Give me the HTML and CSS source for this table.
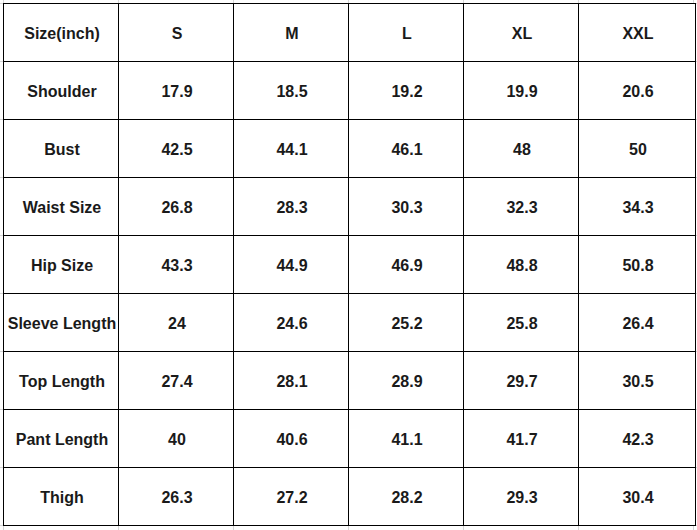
FILE: index.html
```html
<!DOCTYPE html>
<html lang="en">
<head>
<meta charset="utf-8">
<title>Size chart</title>
<link rel="stylesheet" href="styles.css">
</head>
<body>
<div class="page">
  <div class="chart" role="table">
    <div class="cell">Size(inch)</div><div class="cell">S</div><div class="cell">M</div><div class="cell">L</div><div class="cell">XL</div><div class="cell">XXL</div>
    <div class="cell">Shoulder</div><div class="cell">17.9</div><div class="cell">18.5</div><div class="cell">19.2</div><div class="cell">19.9</div><div class="cell">20.6</div>
    <div class="cell">Bust</div><div class="cell">42.5</div><div class="cell">44.1</div><div class="cell">46.1</div><div class="cell">48</div><div class="cell">50</div>
    <div class="cell">Waist Size</div><div class="cell">26.8</div><div class="cell">28.3</div><div class="cell">30.3</div><div class="cell">32.3</div><div class="cell">34.3</div>
    <div class="cell">Hip Size</div><div class="cell">43.3</div><div class="cell">44.9</div><div class="cell">46.9</div><div class="cell">48.8</div><div class="cell">50.8</div>
    <div class="cell">Sleeve Length</div><div class="cell">24</div><div class="cell">24.6</div><div class="cell">25.2</div><div class="cell">25.8</div><div class="cell">26.4</div>
    <div class="cell">Top Length</div><div class="cell">27.4</div><div class="cell">28.1</div><div class="cell">28.9</div><div class="cell">29.7</div><div class="cell">30.5</div>
    <div class="cell">Pant Length</div><div class="cell">40</div><div class="cell">40.6</div><div class="cell">41.1</div><div class="cell">41.7</div><div class="cell">42.3</div>
    <div class="cell">Thigh</div><div class="cell">26.3</div><div class="cell">27.2</div><div class="cell">28.2</div><div class="cell">29.3</div><div class="cell">30.4</div>
  </div>
</div>
</body>
</html>
```
FILE: styles.css
```css
html, body {
  margin: 0;
  padding: 0;
}
body {
  background-color: #ffffff;
  background-image:
    repeating-linear-gradient(to right, transparent 0 3px, #d6d6d6 3px 4px, transparent 4px 115px),
    repeating-linear-gradient(to bottom, transparent 0 3px, #d6d6d6 3px 4px, transparent 4px 58px);
  width: 697px;
  height: 530px;
  overflow: hidden;
}
.page {
  padding: 3px 0 0 3px;
}
.chart {
  display: grid;
  grid-template-columns: 114px 114px 114px 114px 114px 116px;
  grid-auto-rows: 57px;
  gap: 1px;
  width: max-content;
  background: #000;
  border: 1px solid #000;
  font-family: "Liberation Sans", Arial, sans-serif;
  font-weight: bold;
  font-size: 16px;
  color: #1a1a1a;
}
.cell {
  background: #fff;
  display: flex;
  align-items: center;
  justify-content: center;
  white-space: nowrap;
  padding: 2px 0 0 2px;
  box-sizing: border-box;
}
```
